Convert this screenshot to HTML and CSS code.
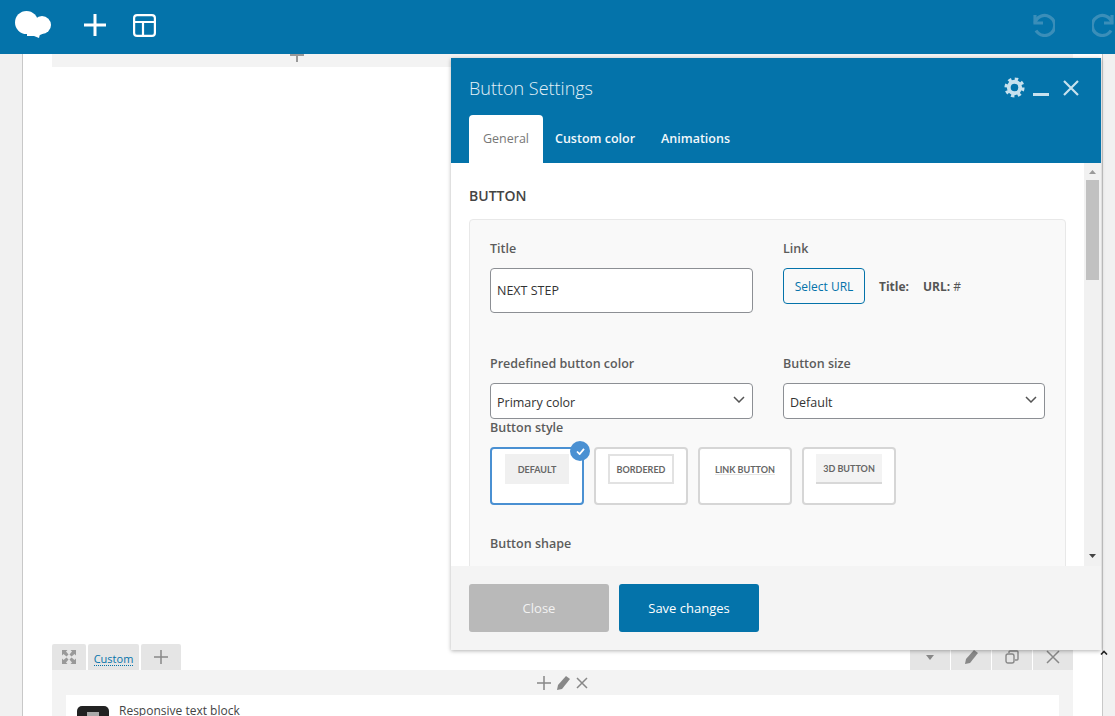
FILE: index.html
```html
<!DOCTYPE html>
<html lang="en">
<head>
<meta charset="utf-8">
<title>Button Settings</title>
<link rel="stylesheet" href="styles.css">
</head>
<body>
<header class="topbar">
  <svg class="logo" viewBox="0 0 36 27" fill="#fff"><circle cx="11.500" cy="11.500" r="11.500"/><circle cx="27" cy="14" r="9"/><ellipse cx="20" cy="20" rx="9" ry="5"/><path d="M12 22l6 0 7 1-1 4-5-2-7 0z"/></svg>
  <svg class="tool-plus" viewBox="0 0 22 22" stroke="#fff" stroke-width="3"><path d="M11 0v22M0 11h22"/></svg>
  <svg class="tool-layout" viewBox="0 0 23 23" fill="none" stroke="#fff" stroke-width="2.200"><rect x="1.100" y="1.100" width="20.800" height="20.800" rx="3"/><path d="M1 8h21M10 8v14"/></svg>
  <svg class="history undo" viewBox="0 0 24 24" fill="none" stroke="#3a8eb9" stroke-width="3.200"><path d="M4 2v8h8"/><path d="M4 10a10 10 0 1 1 1 7.500"/></svg>
  <svg class="history redo" viewBox="0 0 24 24" fill="none" stroke="#3a8eb9" stroke-width="3.200"><path d="M20 2v8h-8"/><path d="M20 10a10 10 0 1 0-1 7.500"/></svg>
</header>

<main class="canvas">
  <div class="row-top">
    <svg class="row-top-plus" viewBox="0 0 14 8" stroke="#999" stroke-width="2"><path d="M0 1h14M7 0v8"/></svg>
  </div>
  <div class="row-tools">
    <div class="tabs">
      <span class="tab tab-expand"><svg class="icon-expand" viewBox="0 0 14 14" fill="#999"><path d="M0 0h5.500L4 1.500 6.500 4.500 4.500 6.500 1.500 4 0 5.500zM14 0v5.500L12.500 4 9.500 6.500 7.500 4.500 10 1.500 8.500 0zM0 14V8.500L1.500 10 4.500 7.500 6.500 9.500 4 12.500 5.500 14zM14 14H8.500L10 12.500 7.500 9.500 9.500 7.500 12.500 10 14 8.500z"/></svg></span>
      <span class="tab tab-custom"><a class="custom-link">Custom</a></span>
      <span class="tab tab-add"><svg class="icon-add" viewBox="0 0 14 14" stroke="#888" stroke-width="1.500"><path d="M7 0v14M0 7h14"/></svg></span>
    </div>
    <div class="tabs tabs-right">
      <span class="tab tab-r"><svg class="icon-caret" viewBox="0 0 8 5" fill="#888"><path d="M0 0h8L4 5z"/></svg></span>
      <span class="tab tab-r"><svg class="icon-sm" viewBox="0 0 14 14" fill="#888"><path d="M10 0l4 3-8 10-5 1 1-5z"/></svg></span>
      <span class="tab tab-r"><svg class="icon-sm" viewBox="0 0 14 14" fill="none" stroke="#888" stroke-width="1.400"><rect x="1" y="4" width="8" height="9" rx="2"/><path d="M4 3V2a1 1 0 0 1 1-1h7a1 1 0 0 1 1 1v7a1 1 0 0 1-1 1h-2"/></svg></span>
      <span class="tab tab-r"><svg class="icon-sm" viewBox="0 0 14 14" stroke="#888" stroke-width="1.500"><path d="M1 1l12 12M13 1L1 13"/></svg></span>
    </div>
  </div>
  <div class="row-body">
    <div class="inner-tools">
      <svg class="icon-inner" viewBox="0 0 14 14" stroke="#888" stroke-width="1.500"><path d="M7 0v14M0 7h14"/></svg>
      <svg class="icon-inner" viewBox="0 0 14 14" fill="#888"><path d="M10 0l4 3-8 10-5 1 1-5z"/></svg>
      <svg class="icon-inner" viewBox="0 0 14 14" stroke="#888" stroke-width="1.500"><path d="M2 2l10 10M12 2L2 12"/></svg>
    </div>
    <div class="element">
      <span class="element-icon"><span class="element-glyph"></span></span>
      <span class="element-name">Responsive text block</span>
    </div>
  </div>
</main>

<section class="modal">
  <div class="modal-head">
    <div class="modal-title-row">
      <h2 class="modal-title">Button Settings</h2>
      <div class="modal-actions">
        <svg class="act-gear" viewBox="0 0 22 22" fill="none" stroke="#c7e1ee"><circle cx="11" cy="11" r="6" stroke-width="4"/><circle cx="11" cy="11" r="8.800" stroke-width="3.500" stroke-dasharray="3.500 3.410"/></svg>
        <span class="act-min"></span>
        <svg class="act-close" viewBox="0 0 16 16" stroke="#c7e1ee" stroke-width="2.200"><path d="M1 1l14 14M15 1L1 15"/></svg>
      </div>
    </div>
    <nav class="modal-tabs">
      <span class="mtab mtab-active">General</span>
      <span class="mtab">Custom color</span>
      <span class="mtab">Animations</span>
    </nav>
  </div>

  <div class="modal-main">
    <div class="modal-scroll">
      <h3 class="section-title">BUTTON</h3>
      <div class="panel">
        <div class="form-grid">
          <div class="field">
            <label class="label">Title</label>
            <div class="input">NEXT STEP</div>
          </div>
          <div class="field">
            <label class="label">Link</label>
            <div class="link-row">
              <span class="btn-url">Select URL</span>
              <b class="link-meta">Title:</b>
              <span class="link-url"><b>URL:</b> #</span>
            </div>
          </div>
          <div class="field">
            <label class="label">Predefined button color</label>
            <div class="select">Primary color<svg class="chev" viewBox="0 0 12 7" fill="none" stroke="#555" stroke-width="1.500"><path d="M1 1l5 5 5-5"/></svg></div>
          </div>
          <div class="field">
            <label class="label">Button size</label>
            <div class="select">Default<svg class="chev" viewBox="0 0 12 7" fill="none" stroke="#555" stroke-width="1.500"><path d="M1 1l5 5 5-5"/></svg></div>
          </div>
        </div>
        <label class="label label-style">Button style</label>
        <div class="styles">
          <div class="style style-on">
            <span class="thumb thumb-fill">DEFAULT</span>
            <span class="check"><svg class="check-mark" viewBox="0 0 10 8" fill="none" stroke="#fff" stroke-width="2"><path d="M1 4l3 3 5-6"/></svg></span>
          </div>
          <div class="style"><span class="thumb thumb-border">BORDERED</span></div>
          <div class="style"><span class="thumb thumb-link">LINK BUTTON</span></div>
          <div class="style"><span class="thumb thumb-3d">3D BUTTON</span></div>
        </div>
        <label class="label label-shape">Button shape</label>
      </div>
    </div>
    <div class="scrollbar">
      <svg class="arrow" viewBox="0 0 7 4" fill="#999"><path d="M3.500 0L7 4H0z"/></svg>
      <span class="thumb-bar"></span>
      <svg class="arrow arrow-down" viewBox="0 0 7 4" fill="#444"><path d="M0 0h7L3.500 4z"/></svg>
    </div>
  </div>

  <div class="modal-foot">
    <span class="btn btn-close">Close</span>
    <span class="btn btn-save">Save changes</span>
  </div>
</section>

<svg class="stray-caret" viewBox="0 0 8 5" fill="none" stroke="#222" stroke-width="1.600"><path d="M1 4.500l3-3 3 3"/></svg>
</body>
</html>
```

FILE: styles.css
```css
* { box-sizing: border-box; }
html, body { margin: 0; height: 716px; overflow: hidden; }
body {
  position: relative;
  background: #f1f1f1;
  font-family: "Open Sans", "Noto Sans", "Liberation Sans", sans-serif;
  color: #444;
}

.topbar {
  height: 54px;
  background: #0473aa;
  display: flex;
  align-items: center;
  width: 1115px;
  overflow: hidden;
}
.logo { width: 36px; height: 27px; margin-left: 15px; margin-top: -6px; flex: none; }
.tool-plus { width: 22px; height: 22px; margin-left: 33px; margin-top: -4px; flex: none; }
.tool-layout { width: 23px; height: 23px; margin-left: 27px; margin-top: -4px; flex: none; }
.history { width: 24px; height: 24px; margin-top: -4px; flex: none; }
.undo { margin-left: auto; margin-right: 37px; }
.redo { margin-right: -1px; }

.canvas {
  margin-left: 22px;
  width: 1081px;
  height: 662px;
  background: #fff;
  border-left: 1px solid #c8c8c8;
  border-right: 1px solid #c8c8c8;
  padding: 0 29px;
  display: flex;
  flex-direction: column;
  overflow: hidden;
}
.row-top {
  height: 13px;
  background: #f3f3f3;
  display: flex;
  justify-content: center;
  flex: none;
}
.row-top-plus { width: 14px; height: 8px; margin-left: -532px; }
.row-tools {
  margin-top: 577px;
  height: 26px;
  display: flex;
  justify-content: space-between;
  flex: none;
}
.tabs { display: flex; gap: 2px; }
.tabs-right { gap: 1px; }
.tab {
  height: 26px;
  background: #e5e5e5;
  border-radius: 2px 2px 0 0;
  display: flex;
  align-items: center;
  justify-content: center;
}
.tab-expand { width: 34px; }
.tab-custom { width: 51px; padding-top: 3px; }
.tab-add { width: 40px; }
.tab-r { width: 40px; }
.icon-expand { width: 14px; height: 14px; }
.icon-add { width: 14px; height: 14px; }
.icon-caret { width: 8px; height: 5px; }
.icon-sm { width: 14px; height: 14px; margin-top: 0; }
.custom-link {
  font-size: 11px;
  color: #0473aa;
  border-bottom: 1px dotted #0473aa;
  line-height: 13px;
}
.row-body {
  flex: 1;
  background: #f3f3f3;
  padding: 0 14px;
  overflow: hidden;
}
.inner-tools {
  height: 25px;
  display: flex;
  justify-content: center;
  align-items: center;
  gap: 5px;
}
.icon-inner { width: 14px; height: 14px; }
.element {
  height: 40px;
  background: #fff;
  padding: 11px 11px 0;
  display: flex;
  gap: 10px;
}
.element-icon {
  width: 32px;
  height: 32px;
  background: #222;
  border-radius: 5px;
  display: flex;
  justify-content: center;
  padding-top: 6px;
  flex: none;
}
.element-glyph { width: 12px; height: 14px; background: #aaa; }
.element-name { font-size: 12px; line-height: 16px; color: #444; margin-top: -3px; }

.modal {
  position: absolute;
  left: 451px;
  top: 58px;
  width: 650px;
  height: 592px;
  display: flex;
  flex-direction: column;
  background: #f4f4f4;
  box-shadow: 0 1px 4px rgba(0, 0, 0, .3);
}
.modal-head {
  height: 105px;
  background: #0473aa;
  padding: 0 18px;
  flex: none;
  display: flex;
  flex-direction: column;
}
.modal-title-row {
  height: 57px;
  display: flex;
  align-items: center;
  justify-content: space-between;
}
.modal-title {
  margin: 0;
  font-size: 18px;
  font-weight: 300;
  color: #e3f0f7;
  margin-top: 2px;
}
.modal-actions { display: flex; align-items: center; margin-right: 4px; margin-top: 2px; }
.act-gear { width: 21px; height: 21px; }
.act-min { width: 16px; height: 2.500px; background: #c7e1ee; margin: 14px 0 0 8px; }
.act-close { width: 16px; height: 16px; margin-left: 14px; }
.modal-tabs { display: flex; gap: 0; flex: 1; }
.mtab {
  font-size: 12.500px;
  font-weight: 600;
  color: #f2f8fb;
  line-height: 48px;
  margin-right: 26px;
  white-space: nowrap;
}
.mtab-active {
  width: 74px;
  background: #fff;
  border-radius: 4px 4px 0 0;
  color: #777;
  font-weight: 400;
  text-align: center;
  margin-right: 12px;
}

.modal-main { height: 403px; display: flex; background: #fff; flex: none; }
.modal-scroll { width: 633px; padding: 0 18px; overflow: hidden; }
.section-title {
  margin: 0;
  font-size: 14px;
  font-weight: 600;
  color: #444;
  line-height: 20px;
  padding-top: 23px;
  height: 56px;
}
.panel {
  width: 597px;
  background: #f9f9f9;
  border: 1px solid #e8e8e8;
  border-radius: 4px;
  padding: 19px 20px 60px;
}
.form-grid {
  display: grid;
  grid-template-columns: 263px 262px;
  column-gap: 30px;
  grid-template-rows: 94px 64px;
  row-gap: 0;
  margin-bottom: 0;
  height: 179px;
  align-content: start;
  row-gap: 21px;
}
.label {
  display: block;
  font-size: 12.500px;
  font-weight: 600;
  color: #5c5c5c;
  line-height: 20px;
  margin-bottom: 9px;
}
.input, .select {
  background: #fff;
  border: 1px solid #8c8f94;
  border-radius: 4px;
  font-size: 12.500px;
  color: #333;
  padding-left: 6px;
  display: flex;
  align-items: center;
  justify-content: space-between;
}
.input { height: 45px; }
.select { height: 36px; padding-right: 7px; padding-top: 2px; margin-top: 0; }
.chev { width: 12px; height: 7px; margin-top: -5px; }
.link-row { display: flex; align-items: center; height: 36px; }
.btn-url {
  width: 82px;
  height: 36px;
  border: 1px solid #0473aa;
  border-radius: 4px;
  font-size: 12px;
  color: #0473aa;
  display: flex;
  align-items: center;
  justify-content: center;
  flex: none;
}
.link-meta { font-size: 12px; font-weight: 700; color: #555; margin-left: 14px; }
.link-url { font-size: 12px; color: #555; margin-left: 14px; }
.link-url b { font-weight: 700; }
.label-style { margin-top: 0; }
.styles { display: flex; gap: 10px; }
.style {
  position: relative;
  width: 94px;
  height: 58px;
  border: 2px solid #d6d6d6;
  border-radius: 4px;
  padding: 5px 5px;
  background: #fff;
  display: flex;
  flex: none;
}
.style-on { border-color: #4a90d2; }
.thumb {
  flex: 1;
  margin: 0 0 0;
  font-family: "Lato", "Liberation Sans", sans-serif;
  font-size: 9px;
  font-weight: 700;
  color: #666;
  display: flex;
  align-items: center;
  justify-content: center;
  white-space: nowrap;
  height: 30px;
  margin-top: 0;
}
.thumb-fill { background: #f0f0f0; margin: 0 8px; }
.thumb-border { border: 2px solid #e2e2e2; margin: 0 7px; }
.thumb-link { text-decoration: underline #e4e4e4; }
.thumb-3d { background: #f3f3f3; border-bottom: 2px solid #d8d8d8; margin: 0 7px; }
.check {
  position: absolute;
  right: -8px;
  top: -8px;
  width: 20px;
  height: 20px;
  border-radius: 50%;
  background: #4a90d2;
  display: flex;
  align-items: center;
  justify-content: center;
}
.check-mark { width: 9px; height: 7px; }
.label-shape { margin-top: 29px; }

.scrollbar {
  width: 17px;
  background: #f1f1f1;
  padding: 0 2px;
  display: flex;
  flex-direction: column;
  align-items: center;
  flex: none;
}
.arrow { width: 7px; height: 4px; margin-top: 7px; flex: none; }
.thumb-bar { width: 13px; height: 100px; background: #c1c1c1; margin-top: 6px; flex: none; }
.arrow-down { margin-top: auto; margin-bottom: 8px; }

.modal-foot {
  flex: 1;
  padding: 18px;
  display: flex;
  gap: 10px;
  background: #f4f4f4;
}
.btn {
  width: 140px;
  height: 48px;
  border-radius: 3px;
  font-size: 13px;
  display: flex;
  align-items: center;
  justify-content: center;
}
.btn-close { background: #b9b9b9; color: #f2f2f2; }
.btn-save { background: #0473aa; color: #fff; }

.stray-caret {
  position: absolute;
  left: 1100px;
  top: 650px;
  width: 8px;
  height: 5px;
}
```
